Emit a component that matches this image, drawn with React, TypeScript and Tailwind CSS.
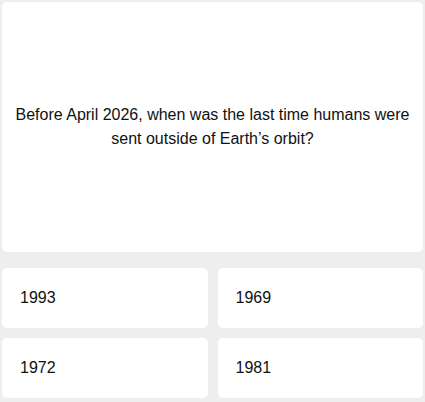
import React from 'react';

const answers = ['1993', '1969', '1972', '1981'];

export default function App() {
    return (
        <div className="w-[425px] h-[402px] bg-[#eeeeee] p-[2px] font-['Liberation_Sans',Arial,sans-serif] text-[16px] text-[#111111]">
            {/* Question */}
            <div className="h-[250px] bg-white rounded-[5px] flex items-center justify-center px-3 text-center leading-[24px]">
                Before April 2026, when was the last time humans were sent outside of Earth’s orbit?
            </div>

            {/* Answers */}
            <div className="mt-[16px] grid grid-cols-2 gap-[10px]">
                {answers.map((a) => (
                    <div key={a} className="h-[60px] bg-white rounded-[5px] flex items-center pl-[18px]">
                        {a}
                    </div>
                ))}
            </div>
        </div>
    );
}
